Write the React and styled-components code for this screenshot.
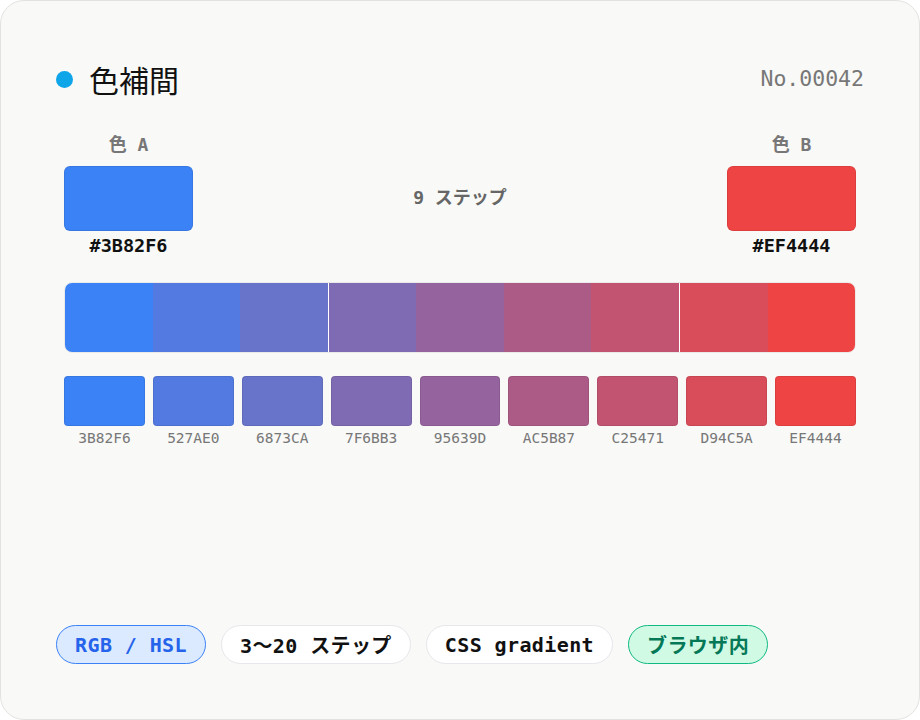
import React from "react";
import styled, { createGlobalStyle } from "styled-components";

const Global = createGlobalStyle`
  html, body { margin: 0; padding: 0; background: #ffffff; }
  * { box-sizing: border-box; }
`;

const MONO = `"DejaVu Sans Mono", "Noto Sans CJK JP", monospace`;

const Card = styled.div`
  width: 920px;
  height: 720px;
  background: #f9f9f7;
  border: 1px solid #e2e2e0;
  border-radius: 24px;
  padding: 55px 55px;
  display: flex;
  flex-direction: column;
  font-family: ${MONO};
`;

const Header = styled.div`
  height: 46px;
  display: flex;
  align-items: center;
  justify-content: space-between;
`;

const TitleWrap = styled.div`
  display: flex;
  align-items: center;
  gap: 16px;
`;

const Dot = styled.span`
  width: 17px;
  height: 17px;
  border-radius: 50%;
  background: #0ea5e9;
`;

const Title = styled.h1`
  margin: 0;
  font-family: "Noto Sans CJK JP", sans-serif;
  font-weight: 400;
  font-size: 30px;
  color: #111;
  line-height: 44px;
`;

const Serial = styled.div`
  font-size: 21.5px;
  color: #777;
  line-height: 44px;
`;

const Body = styled.div`
  padding: 0 8px;
  display: flex;
  flex-direction: column;
`;

const Ends = styled.div`
  margin-top: 33px;
  display: flex;
  align-items: center;
  justify-content: space-between;
`;

const EndCol = styled.div`
  display: flex;
  flex-direction: column;
  align-items: center;
`;

const EndLabel = styled.div`
  font-size: 18px;
  font-weight: 700;
  color: #777;
  line-height: 20px;
  white-space: pre;
`;

const BigSwatch = styled.div`
  margin-top: 11px;
  width: 129px;
  height: 65px;
  border-radius: 6px;
  border: 1px solid rgba(0, 0, 0, 0.08);
  background: ${(p) => p.$c};
`;

const EndHex = styled.div`
  margin-top: 5px;
  font-size: 18.5px;
  font-weight: 700;
  color: #111;
  line-height: 20px;
`;

const Steps = styled.div`
  font-size: 18px;
  font-weight: 700;
  color: #666;
  white-space: pre;
`;

const Bar = styled.div`
  margin-top: 26px;
  height: 71px;
  display: flex;
  border-radius: 8px;
  overflow: hidden;
  border: 1px solid rgba(0, 0, 0, 0.06);
`;

const Seg = styled.div`
  flex: 1;
  background: ${(p) => p.$c};
  border-left: ${(p) => (p.$seam ? "1px solid #ffffff" : "none")};
`;

const Grid = styled.div`
  margin-top: 23px;
  display: grid;
  grid-template-columns: repeat(9, 1fr);
  gap: 8px;
`;

const Cell = styled.div`
  display: flex;
  flex-direction: column;
  align-items: center;
  gap: 4px;
`;

const SmallSwatch = styled.div`
  width: 100%;
  height: 50px;
  border-radius: 4px;
  border: 1px solid rgba(0, 0, 0, 0.08);
  background: ${(p) => p.$c};
`;

const SmallHex = styled.div`
  font-size: 14.5px;
  color: #777;
  line-height: 16px;
`;

const Chips = styled.div`
  margin-top: auto;
  display: flex;
  gap: 15px;
`;

const tones = {
  blue: { bg: "#dbeafe", bd: "#3b82f6", fg: "#2563eb" },
  plain: { bg: "#ffffff", bd: "#e5e7eb", fg: "#111111" },
  green: { bg: "#d1fae5", bd: "#10b981", fg: "#047857" },
};

const Chip = styled.div`
  height: 39px;
  padding: 0 18px;
  border-radius: 999px;
  display: flex;
  align-items: center;
  font-size: 20px;
  letter-spacing: 0.4px;
  font-weight: 700;
  white-space: pre;
  background: ${(p) => tones[p.$tone].bg};
  border: 1px solid ${(p) => tones[p.$tone].bd};
  color: ${(p) => tones[p.$tone].fg};
`;

const colors = [
  "3B82F6",
  "527AE0",
  "6873CA",
  "7F6BB3",
  "95639D",
  "AC5B87",
  "C25471",
  "D94C5A",
  "EF4444",
];

export default function App() {
  return (
    <>
      <Global />
      <Card>
        <Header>
          <TitleWrap>
            <Dot />
            <Title>色補間</Title>
          </TitleWrap>
          <Serial>No.00042</Serial>
        </Header>
        <Body>
          <Ends>
            <EndCol>
              <EndLabel>色 A</EndLabel>
              <BigSwatch $c="#3B82F6" />
              <EndHex>#3B82F6</EndHex>
            </EndCol>
            <Steps>9 ステップ</Steps>
            <EndCol>
              <EndLabel>色 B</EndLabel>
              <BigSwatch $c="#EF4444" />
              <EndHex>#EF4444</EndHex>
            </EndCol>
          </Ends>
          <Bar>
            {colors.map((c, i) => (
              <Seg key={c} $c={"#" + c} $seam={i === 3 || i === 7} />
            ))}
          </Bar>
          <Grid>
            {colors.map((c) => (
              <Cell key={c}>
                <SmallSwatch $c={"#" + c} />
                <SmallHex>{c}</SmallHex>
              </Cell>
            ))}
          </Grid>
        </Body>
        <Chips>
          <Chip $tone="blue">RGB / HSL</Chip>
          <Chip $tone="plain">3〜20 ステップ</Chip>
          <Chip $tone="plain">CSS gradient</Chip>
          <Chip $tone="green">ブラウザ内</Chip>
        </Chips>
      </Card>
    </>
  );
}
